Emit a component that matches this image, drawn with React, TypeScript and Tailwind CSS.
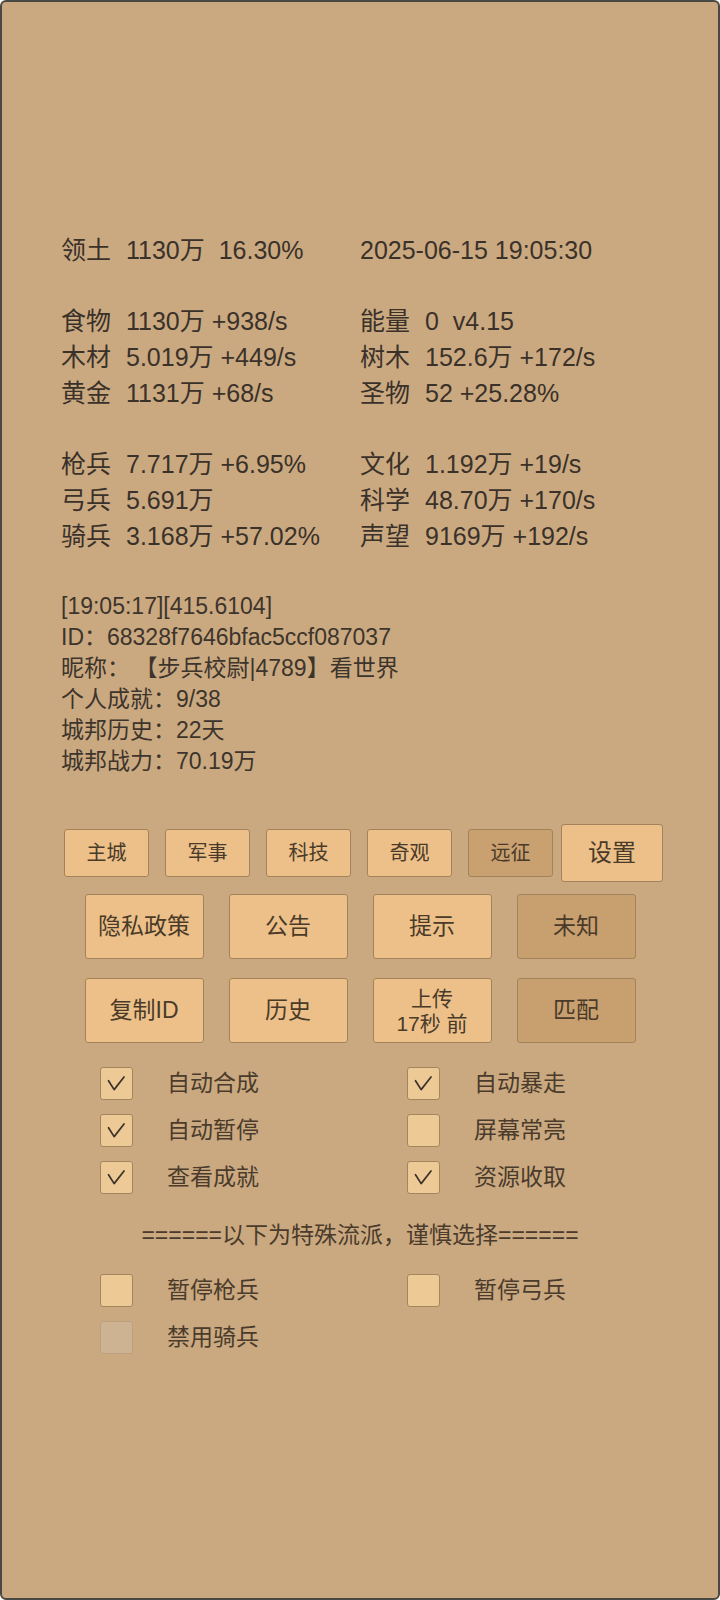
import React from 'react';

const FONT = "font-['Liberation_Sans','Noto_Sans_CJK_SC',sans-serif]";

type StatRow = [string, string, string, string] | null;

const stats: StatRow[] = [
  ['领土', '1130万\u00a0\u00a016.30%', '', '2025-06-15 19:05:30'],
  null,
  ['食物', '1130万 +938/s', '能量', '0\u00a0\u00a0v4.15'],
  ['木材', '5.019万 +449/s', '树木', '152.6万 +172/s'],
  ['黄金', '1131万 +68/s', '圣物', '52 +25.28%'],
  null,
  ['枪兵', '7.717万 +6.95%', '文化', '1.192万 +19/s'],
  ['弓兵', '5.691万', '科学', '48.70万 +170/s'],
  ['骑兵', '3.168万 +57.02%', '声望', '9169万 +192/s'],
];

const tabs = [
  { label: '主城', dark: false },
  { label: '军事', dark: false },
  { label: '科技', dark: false },
  { label: '奇观', dark: false },
  { label: '远征', dark: true },
];

const Stat: React.FC<{ label: string; value: string }> = ({ label, value }) => (
  <div className="flex whitespace-nowrap">
    {label ? <span className="w-[65px] shrink-0">{label}</span> : null}
    <span>{value}</span>
  </div>
);

const BigButton: React.FC<{ dark?: boolean; children: React.ReactNode }> = ({ dark, children }) => (
  <button
    className={`w-[119px] h-[65px] rounded-[3px] border border-[#a3835c] text-[23px] text-[#4a3a29] flex flex-col items-center justify-center ${
      dark ? 'bg-[#c89f6f]' : 'bg-[#ecc088]'
    }`}
  >
    {children}
  </button>
);

const CheckBox: React.FC<{ checked?: boolean; disabled?: boolean; label: string }> = ({
  checked,
  disabled,
  label,
}) => (
  <div className="flex items-center h-[47px]">
    <div
      className={`w-[33px] h-[33px] rounded-[3px] border flex items-center justify-center ${
        disabled ? 'bg-[#cdb392] border-[#bba17f]' : 'bg-[#edc996] border-[#a38560]'
      }`}
    >
      {checked && (
        <svg width="33" height="33" viewBox="0 0 33 33" fill="none">
          <polyline
            points="8,13.5 14,23 24.5,9.5"
            stroke="#3a3129"
            strokeWidth="1.8"
            strokeLinecap="round"
            strokeLinejoin="round"
          />
        </svg>
      )}
    </div>
    <span className="ml-[34px] text-[23px] text-[#4a3b2b]">{label}</span>
  </div>
);

export default function App() {
  return (
    <div
      className={`w-[720px] h-[1600px] bg-[#caa981] border-2 border-[#4a4843] rounded-[6px] overflow-hidden text-[#3a3129] ${FONT}`}
    >
      {/* resource stats */}
      <div className="pt-[230px] pl-[59px] text-[25px] leading-[36px]">
        {stats.map((row, i) =>
          row ? (
            <div key={i} className="grid grid-cols-[299px_1fr]">
              <Stat label={row[0]} value={row[1]} />
              <Stat label={row[2]} value={row[3]} />
            </div>
          ) : (
            <div key={i} className="h-[35px]" />
          )
        )}
      </div>

      {/* player info */}
      <div className="mt-[37px] pl-[59px] text-[23px] leading-[31px] text-[#3d342b] whitespace-nowrap">
        <div>[19:05:17][415.6104]</div>
        <div>ID：68328f7646bfac5ccf087037</div>
        <div>
          昵称：<span className="ml-[16px]">【步兵校尉|4789】看世界</span>
        </div>
        <div>个人成就：9/38</div>
        <div>城邦历史：22天</div>
        <div>城邦战力：70.19万</div>
      </div>

      {/* tab buttons */}
      <div className="mt-[47px] pl-[62px] flex items-center">
        <div className="flex gap-[16px]">
          {tabs.map((t) => (
            <button
              key={t.label}
              className={`w-[85px] h-[48px] rounded-[3px] border border-[#a3835c] text-[20px] text-[#4a3a29] ${
                t.dark ? 'bg-[#c9a070]' : 'bg-[#ecc088]'
              }`}
            >
              {t.label}
            </button>
          ))}
        </div>
        <button className="ml-[8px] w-[102px] h-[58px] rounded-[3px] border border-[#a3835c] bg-[#ecc088] text-[24px] text-[#4a3a29]">
          设置
        </button>
      </div>

      <div className="mt-[12px] flex justify-center gap-[25px]">
        <BigButton>隐私政策</BigButton>
        <BigButton>公告</BigButton>
        <BigButton>提示</BigButton>
        <BigButton dark>未知</BigButton>
      </div>

      <div className="mt-[19px] flex justify-center gap-[25px]">
        <BigButton>复制ID</BigButton>
        <BigButton>历史</BigButton>
        <BigButton>
          <span className="text-[21px] leading-[25px]">上传</span>
          <span className="text-[21px] leading-[25px]">17秒 前</span>
        </BigButton>
        <BigButton dark>匹配</BigButton>
      </div>

      {/* options */}
      <div className="mt-[17px] pl-[98px] grid grid-cols-[307px_1fr]">
        <CheckBox checked label="自动合成" />
        <CheckBox checked label="自动暴走" />
        <CheckBox checked label="自动暂停" />
        <CheckBox label="屏幕常亮" />
        <CheckBox checked label="查看成就" />
        <CheckBox checked label="资源收取" />
      </div>

      <div className="mt-[11px] mb-[8px] text-center text-[23px] leading-[47px] text-[#4a3b2b]">
        ======以下为特殊流派，谨慎选择======
      </div>

      <div className="pl-[98px] grid grid-cols-[307px_1fr]">
        <CheckBox label="暂停枪兵" />
        <CheckBox label="暂停弓兵" />
        <CheckBox disabled label="禁用骑兵" />
      </div>
    </div>
  );
}
